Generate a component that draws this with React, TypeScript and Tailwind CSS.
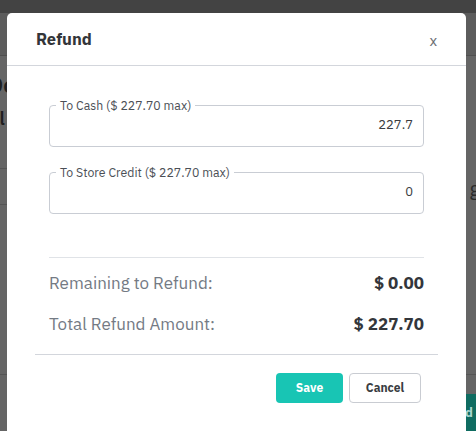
import React from "react";

const font = { fontFamily: '"IBM Plex Sans", Roboto, sans-serif' };

function AmountField({ label, value }: { label: string; value: string }) {
  return (
    <fieldset className="rounded-[4px] border border-[#c9cdd4] pb-[9px] pl-[6px] pr-[10px] pt-0">
      <legend className="px-[4px] text-[12.3px] leading-[14px] text-[#4b4f56]">{label}</legend>
      <div className="h-[25px] pt-[2px] text-right text-[13px] leading-[22px] text-[#3a3d42]">{value}</div>
    </fieldset>
  );
}

function SummaryRow({ label, value }: { label: string; value: string }) {
  return (
    <div className="flex h-[41px] items-center justify-between">
      <span className="text-[17px] text-[#747a84]">{label}</span>
      <span className="text-[17px] font-bold text-[#33363b]">{value}</span>
    </div>
  );
}

export default function App() {
  return (
    <div className="relative h-[431px] w-[476px] overflow-hidden bg-[#656565]" style={font}>
      {/* page behind the overlay */}
      <div className="flex h-full flex-col">
        <div className="h-[13px] bg-[#434343]" />
        <div className="h-[43px] border-b border-[#4f4f4f] bg-[#5c5c5c]" />
        <div className="flex h-[112px] flex-col pt-[14px] text-[22px] font-semibold leading-[30px] text-[#1f1f1f]">
          <span className="-ml-[12px]">Do</span>
          <span className="-ml-[8px] mt-[4px] text-[18px]">Il</span>
        </div>
        <div className="flex h-[37px] items-center justify-between">
          <div className="h-full w-[30px] border-y border-[#555]" />
          <span className="-mr-[4px] pt-[4px] text-[20px] text-[#2a2a2a]">g</span>
        </div>
        <div className="h-[170px] border-b border-[#555]" />
        <div className="flex flex-1 justify-end pt-[19px]">
          <div className="flex h-[37px] w-[12px] items-center bg-[#0f6c61] pl-[1px] text-[13px] font-bold text-[#a9d6cf]">d</div>
        </div>
      </div>

      {/* modal */}
      <div className="absolute left-[7px] top-[13px] h-[440px] w-[459px] rounded-t-[5px] bg-white">
        <div className="flex h-[53px] items-center justify-between border-b border-[#d3d6dc] pl-[29px] pr-[29px]">
          <span className="pt-[1px] text-[16.5px] font-bold text-[#333539]">Refund</span>
          <span className="pt-[4px] text-[15px] text-[#6a6d72]">x</span>
        </div>

        <div className="px-[42px] pt-[32px]">
          <AmountField label="To Cash ($ 227.70 max)" value="227.7" />
          <div className="h-[18px]" />
          <AmountField label="To Store Credit ($ 227.70 max)" value="0" />
          <div className="mt-[43px] border-t border-[#e0e3e7]" />
          <div className="pt-[5px]">
            <SummaryRow label="Remaining to Refund:" value="$ 0.00" />
            <SummaryRow label="Total Refund Amount:" value="$ 227.70" />
          </div>
        </div>

        <div className="mx-[28px] mt-[9px] border-t border-[#d3d6dc]" />

        <div className="flex justify-end gap-[6px] pr-[45px] pt-[18px]">
          <button className="h-[30px] w-[67px] rounded-[4px] bg-[#18c5b4] text-[12px] font-bold text-white">Save</button>
          <button className="h-[30px] w-[72px] rounded-[4px] border border-[#c9ccd2] bg-white text-[12px] font-bold text-[#3a3d42]">Cancel</button>
        </div>
      </div>
    </div>
  );
}
